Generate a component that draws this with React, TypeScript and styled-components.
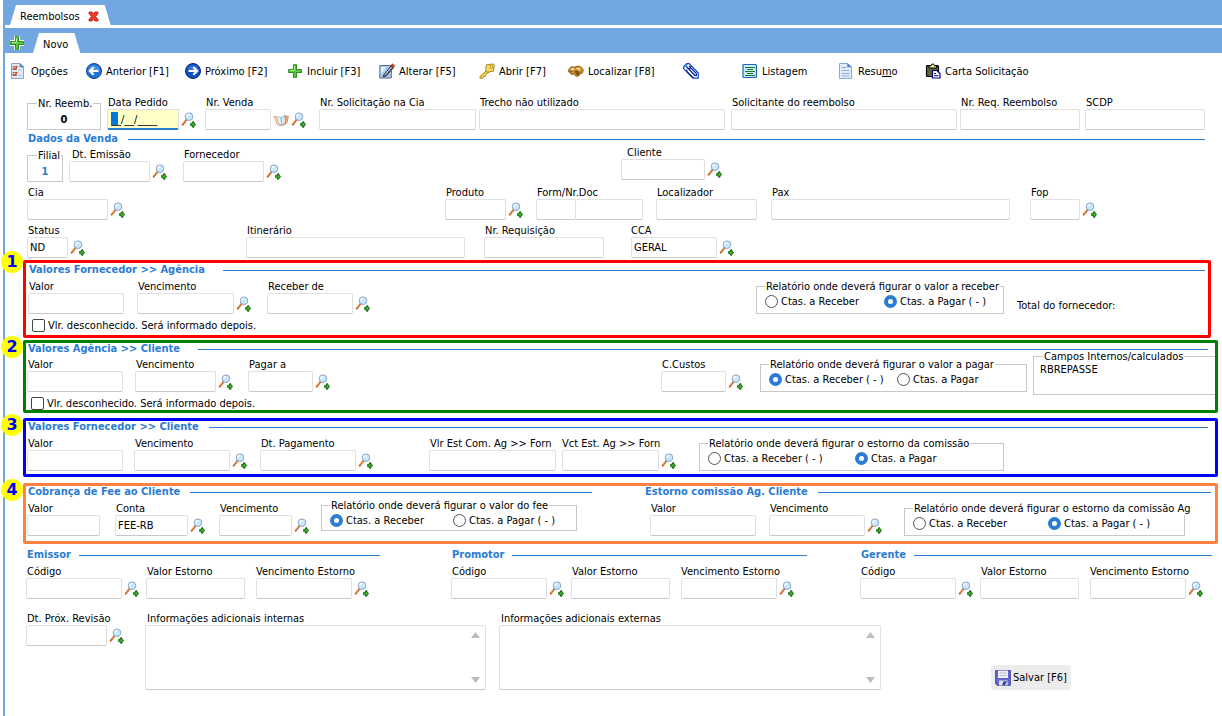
import React, { useId } from "react";
import styled, { createGlobalStyle, css } from "styled-components";

const BLUE = "#72a6e0";
const ACCENT = "#2b7cd3";
const LINE = "#c8c8c8";

const GlobalStyle = createGlobalStyle`
  *, *::before, *::after { box-sizing: border-box; }
  html, body, #root { height: 100%; }
  body { margin: 0; background: #fff; }
  body, input, button, textarea {
    font-family: "DejaVu Sans Condensed", "DejaVu Sans", sans-serif;
    font-size: 11px;
    line-height: 13px;
    color: #000;
  }
`;

/* ---------- shell ---------- */

const Shell = styled.div`
  min-height: 100%;
  margin-left: 3px;
  border-left: 2px solid ${BLUE};
`;

const OuterTabs = styled.nav`
  display: flex;
  align-items: flex-end;
  height: 25px;
  padding-left: 5px;
  background: ${BLUE};
`;

const InnerTabs = styled.nav`
  display: flex;
  align-items: flex-end;
  height: 25px;
  margin-top: 3px;
  padding-left: 4px;
  background: ${BLUE};
`;

const Tab = styled.div`
  display: flex;
  align-items: center;
  gap: 8px;
  height: 20px;
  padding: 2px 12px 0 10px;
  background: #fff;
  clip-path: polygon(6px 0, calc(100% - 6px) 0, 100% 100%, 0 100%);
`;

const PlainButton = styled.button`
  display: flex;
  align-items: center;
  gap: 4px;
  padding: 0;
  border: 0;
  background: none;
  white-space: nowrap;
  cursor: pointer;
`;

const AddTab = styled(PlainButton)`
  height: 20px;
  margin-right: 8px;
`;

const Toolbar = styled.div`
  display: grid;
  grid-template-columns: 75px 99px 102px 92px 100px 89px 115px 59px 96px 87px 1fr;
  align-items: center;
  height: 36px;
  padding-left: 6px;
`;

/* ---------- form parts ---------- */

const Form = styled.form`
  padding-top: 5px;
`;

const Row = styled.div<{ $cols: string; $h?: number; $gap?: number }>`
  display: grid;
  grid-template-columns: ${(p) => p.$cols};
  align-items: end;
  min-height: ${(p) => p.$h ?? 34}px;
  margin-top: ${(p) => p.$gap ?? 4}px;
`;

const Block = styled.section`
  padding: 0 17px 0 22px;
`;

const Panel = styled.section<{ $color: string; $gap: number; $end: number; $pad: string }>`
  position: relative;
  margin: ${(p) => p.$gap}px ${(p) => p.$end}px 0 18px;
  padding: ${(p) => p.$pad};
  border: 3px solid ${(p) => p.$color};
  border-radius: 2px;
`;

const Badge = styled.span<{ $raised?: boolean }>`
  position: absolute;
  top: ${(p) => (p.$raised ? -12 : -7)}px;
  left: -25px;
  display: grid;
  place-items: center;
  width: 22px;
  height: 22px;
  border-radius: 50%;
  background: #ffff00;
  color: #0000ff;
  font: bold 16px/20px "DejaVu Sans", sans-serif;
`;

const Title = styled.h2<{ $gap?: number; $end?: number }>`
  display: flex;
  align-items: center;
  gap: ${(p) => p.$gap ?? 10}px;
  margin: 0 ${(p) => p.$end ?? 0}px 0 1px;
  color: ${ACCENT};
  font-size: 11px;
  line-height: 12px;
  white-space: nowrap;
  &::after {
    content: "";
    flex: 1;
    height: 1px;
    background: ${ACCENT};
  }
`;

const FieldBox = styled.div<{ $top?: boolean }>`
  display: flex;
  flex-direction: column;
  min-width: 0;
  align-self: ${(p) => (p.$top ? "start" : "end")};
`;

const Label = styled.label<{ $indent: number }>`
  padding-left: ${(p) => p.$indent}px;
  line-height: 13px;
  white-space: nowrap;
`;

const Controls = styled.div<{ $end: number }>`
  display: flex;
  align-items: center;
  gap: 2px;
  padding-right: ${(p) => p.$end}px;
`;

const boxLook = css`
  border: 1px solid #e0e0e0;
  border-bottom-color: ${LINE};
  border-radius: 2px;
  background: #fff;
  outline: none;
`;

const TextInput = styled.input<{ $w?: number; $active?: boolean }>`
  ${boxLook}
  ${(p) => (p.$w ? `flex: none; width: ${p.$w}px;` : "flex: 1; width: 0; min-width: 0;")}
  height: 21px;
  padding: 0 2px;
  ${(p) =>
    p.$active &&
    css`
      padding-left: 3px;
      border-bottom: 2px solid ${ACCENT};
      background: linear-gradient(#0078d7, #0078d7) 3px 2px / 7px 13px no-repeat #ffffc8;
    `}
`;

const SplitInputs = styled.div`
  display: flex;
  input + input { margin-left: -1px; }
`;

const Memo = styled.div<{ $end?: number }>`
  position: relative;
  padding-right: ${(p) => p.$end ?? 0}px;
  line-height: 0;
`;

const MemoText = styled.textarea`
  ${boxLook}
  width: 100%;
  height: 65px;
  resize: none;
`;

const MemoArrows = styled.svg<{ $right: number }>`
  position: absolute;
  top: 6px;
  right: ${(p) => p.$right}px;
`;

const Group = styled.fieldset<{ $w?: number; $h?: number; $top?: boolean }>`
  width: ${(p) => (p.$w ? `${p.$w}px` : "auto")};
  height: ${(p) => p.$h ?? 34}px;
  min-width: 0;
  margin: 0;
  padding: 0 0 0 8px;
  align-self: ${(p) => (p.$top ? "start" : "end")};
  border: 1px solid ${LINE};
  legend {
    padding: 0 1px;
    line-height: 13px;
    white-space: nowrap;
  }
`;

const NumberGroup = styled(Group)<{ $blue?: boolean }>`
  padding-left: 9px;
  output {
    display: block;
    padding: 3px 9px 0 0;
    color: ${(p) => (p.$blue ? ACCENT : "#000")};
    font-weight: bold;
    text-align: center;
  }
`;

const CalculatedGroup = styled(Group)`
  height: 45px;
  margin: -8px 0 -3px;
  padding-left: 6px;
  border-right: 0;
  legend { margin-left: 3px; }
`;

const Options = styled.div<{ $first: number }>`
  display: grid;
  grid-template-columns: ${(p) => p.$first}px 1fr;
  height: 17px;
  align-items: center;
`;

const Choice = styled.label`
  display: flex;
  align-items: center;
  gap: 3px;
  white-space: nowrap;
`;

const CheckLine = styled(Choice)`
  height: 14px;
  margin: 4px 0 0 4px;
`;

const Radio = styled.input.attrs({ type: "radio" })`
  appearance: none;
  width: 13px;
  height: 13px;
  margin: 0;
  border: 1px solid #555;
  border-radius: 50%;
  background: #fff;
  &:checked { border: 4px solid ${ACCENT}; }
`;

const Check = styled.input.attrs({ type: "checkbox" })`
  appearance: none;
  width: 13px;
  height: 13px;
  margin: 0;
  border: 1px solid #444;
  border-radius: 2px;
  background: #fff;
`;

const TotalText = styled.span`
  align-self: center;
  padding-top: 16px;
`;

const Columns = styled.div<{ $cols: string; $gap?: number }>`
  display: grid;
  grid-template-columns: ${(p) => p.$cols};
  margin-top: ${(p) => p.$gap ?? 0}px;
`;

const SubColumn = styled.div`
  min-width: 0;
`;

const Indented = styled.div`
  padding-left: 6px;
`;

const People = styled.section`
  padding: 0 10px 0 21px;
`;

const SaveButton = styled(PlainButton)`
  gap: 2px;
  justify-self: start;
  height: 25px;
  padding: 0 4px;
  border-radius: 4px;
  background: #ececec;
`;

/* ---------- icons ---------- */

const Svg = ({ children, size = 16 }: { children: React.ReactNode; size?: number }) => (
  <svg width={size} height={size} viewBox="0 0 16 16" aria-hidden="true">
    {children}
  </svg>
);

const LookupIcon = () => (
  <Svg>
    <path d="M5.400 7.800 1.700 12.600" stroke="#c8692a" strokeWidth="2" strokeLinecap="round" />
    <path d="M4.800 7.800 1.500 12" stroke="#f0a860" strokeWidth="0.800" />
    <circle cx="8" cy="4.700" r="3.800" fill="#c9e8fb" stroke="#8aa4c8" strokeWidth="1" />
    <path d="M5.800 4.500a2.400 2.400 0 0 1 2.400-2.200" stroke="#fff" strokeWidth="1.200" fill="none" />
    <path d="M11.500 9.800h1.500v1.500l1.800 1.200-1.800 1.200v1.500h-1.500v-1.500H9.700v-2.400h1.800z" fill="#3fb52a" stroke="#14610f" strokeWidth="0.900" strokeLinejoin="round" />
  </Svg>
);

const PlusIcon = ({ outline = false }: { outline?: boolean }) => (
  <Svg>
    {outline && (
      <path d="M6 2h4v4h4v4h-4v4H6v-4H2V6h4z" fill="#fff" stroke="#fff" strokeWidth="2" strokeLinejoin="round" />
    )}
    <path d="M6.500 1.700h3v4.800h4.800v3H9.500v4.800h-3V9.500H1.700v-3h4.800z" fill="#5cc83c" stroke="#2a8a1c" strokeWidth="1.100" strokeLinejoin="round" />
    <path d="M7.400 3v4.400H3" stroke="#b5f09c" fill="none" />
  </Svg>
);

const CloseIcon = () => (
  <svg width="11" height="11" viewBox="0 0 11 11" aria-hidden="true">
    <path d="M1 1h3l1.500 2L7 1h3v1.500L7.600 5.500 10 8.500V10H7L5.500 8 4 10H1V8.500L3.400 5.500 1 2.500z" fill="#f0392b" stroke="#b01810" strokeWidth="0.800" />
  </svg>
);

const OptionsIcon = () => (
  <Svg>
    <path d="M.500.500h8.500l3.500 3.500v11.500H.500z" fill="#dfeafa" stroke="#8aa2cc" />
    <path d="M9 .500V4h3.500z" fill="#5f8bd0" stroke="#6b8ac0" />
    <path d="M2 3.500h3.500v3H2zM2 9.500h3.500v3H2z" fill="#fff" stroke="#8a5a52" strokeWidth="0.800" />
    <path d="m2.500 5 1.200 1.200L6.400 2.800M2.500 11l1.200 1.200 2.700-3.400" fill="none" stroke="#d84020" strokeWidth="1.200" />
    <path d="M7.500 7h3M7.500 12.500h3" stroke="#9ab4dc" />
  </Svg>
);

const ArrowIcon = ({ right = false }: { right?: boolean }) => (
  <Svg>
    <circle cx="8" cy="8" r="7.500" fill={right ? "#0a4fc4" : "#1f74d8"} stroke={right ? "#06267c" : "#0c3f92"} />
    <path d="M2.500 6.500a5.800 5.800 0 0 1 11 0 12 12 0 0 1-11 0z" fill="#fff" opacity="0.220" />
    <path d={right ? "M3.500 8h8.500M8.300 4.200 12.200 8l-3.900 3.800" : "M12.500 8H4M7.700 4.200 3.800 8l3.900 3.800"} stroke="#fff" strokeWidth="2.200" fill="none" />
  </Svg>
);

const EditIcon = () => (
  <Svg>
    <path d="M.800 2.500h11.500v12.500H.800z" fill="#a9cdf2" stroke="#5b6b86" />
    <path d="M2 4h5L2 11z" fill="#e6f2ff" />
    <path d="M5 11.500 12 2.800l2.500 2L7.300 13l-3.300 1z" fill="#5d6672" stroke="#2c333e" strokeWidth="0.800" />
    <path d="M6 11.500 12.500 4" stroke="#d5dbe2" />
    <path d="m11.800 2.700 1.600-1.900 2.300 2-1.500 1.900z" fill="#e03a1c" stroke="#8e1d0c" strokeWidth="0.600" />
  </Svg>
);

const KeyIcon = () => (
  <Svg>
    <path d="m8 7.200-7 6.300v1.700h2.700l.8-1.700h1.700l.6-1.900L10.200 9z" fill="#f3cf45" stroke="#a67c14" strokeWidth="0.900" />
    <path d="M7.300 1.700 14.500 1l.8 1.200-.9 6-6.300 1-1.400-2z" fill="#f8dc62" stroke="#a67c14" strokeWidth="0.900" strokeLinejoin="round" />
    <path d="M10.800 2.800h2.600v2.600h-1.800z" fill="#fff" stroke="#a67c14" strokeWidth="0.800" />
  </Svg>
);

const BinocularsIcon = () => (
  <Svg>
    <path d="M.700 6.500 3 3.800l4 .3 2-1 3.500.4 2.800 3.300-.7 3-2.500 1.100-1.300 2-3 .400-1.600-2.200-2.800.400L.700 9z" fill="#c98a2b" stroke="#7e4f10" strokeWidth="0.800" />
    <path d="M2 6.500 4 4.900l3 .5-2 2.300zM8 5l3.500-.5 1.500 2-3 1z" fill="#f6d78c" />
    <path d="M7 8.500 9.500 8l2 2.500-2 1.500zM1.500 8l3 .5" stroke="#5b3609" fill="#8a5714" strokeWidth="0.700" />
  </Svg>
);

const ClipIcon = () => (
  <Svg>
    <g fill="none" strokeWidth="1.200" strokeLinejoin="round">
      <path d="M.700 3.700 3.700.700h2.500l9 9.300v5.200H10L.700 5.900z" stroke="#0b3fd0" />
      <path d="m3.300 3.500 8.700 9h1.400v-1.900L6 3M10.300 15 3.800 8.300V6.500M8.500 3.200 6 5.500" stroke="#0822a0" />
      <path d="m1.500 4 3-2.700" stroke="#1e8af0" />
    </g>
  </Svg>
);

const ListIcon = () => (
  <Svg>
    <rect x="1" y="1.500" width="13.500" height="13" rx="1" fill="#cfeafc" stroke="#1c66b8" strokeWidth="1.200" />
    <path d="M3 4.500h10M5 6.500h6M3 8.500h10M5 10.500h6M3 12.500h10" stroke="#157a2c" />
  </Svg>
);

const PageIcon = () => (
  <Svg>
    <path d="M1.500.500h8l4 3.500v11.500h-12z" fill="#e4effc" stroke="#86a9da" />
    <path d="M9.500.500V4h4z" fill="#4e86cf" stroke="#5c88c4" strokeWidth="0.600" />
    <path d="M3.500 4.500h5M3.500 7.500h8M3.500 10.500h8M3.500 13h8" stroke="#8dabd6" />
  </Svg>
);

const PasteIcon = () => (
  <Svg>
    <rect x="1.500" y="2.500" width="12" height="11" rx="1" fill="#62623a" stroke="#000" strokeWidth="1.200" />
    <path d="M4 5V2.800h2L7 1h1.500l1 1.800h2V5z" fill="#f2ee9a" stroke="#000" />
    <path d="M7.500 7.500h4.500l3 3v4.500H7.500z" fill="#fff" stroke="#000080" strokeWidth="1.200" />
    <path d="M9 10.500h2M9 12.700h4.500" stroke="#000080" />
  </Svg>
);

const MapIcon = () => (
  <Svg>
    <path d="m.800 4 3.500 8.500 3.500 1.500L7.500 7z" fill="#fde0c4" stroke="#e9a06c" strokeWidth="0.900" />
    <path d="M3.500 4.300 8 5.800l.8 7.700-3-1.500z" fill="#eef6fc" stroke="#8fb4d4" strokeWidth="0.800" />
    <path d="M8 5.800 12 3.300l.8 7.400-4 2.800z" fill="#dcebf7" stroke="#7ea8cc" strokeWidth="0.800" />
    <path d="m12.300 3.800 3 .700-1.300 6-3.500 2.800 2-2.500z" fill="#fbb27c" stroke="#dd7a3c" strokeWidth="0.900" />
  </Svg>
);

const DiskIcon = () => (
  <Svg>
    <path d="M.600.600h14.800v14.800H2.200L.600 13.800z" fill="#6468c8" stroke="#4a4ea8" />
    <path d="M3 .600h10v7.400H3z" fill="#eef0f6" />
    <path d="M4.500 3h7M4.500 5.500h7" stroke="#b9bfd0" />
    <path d="M4 10.500h8.500v5H4z" fill="#dfe2f0" />
    <path d="M8.500 11.200H12L10 15.500H7z" fill="#3e429c" />
  </Svg>
);

/* ---------- composed controls ---------- */

type FieldProps = {
  label: string;
  w?: number;
  end?: number;
  indent?: number;
  value?: string;
  lookup?: boolean;
  map?: boolean;
  active?: boolean;
  top?: boolean;
};

const Field = ({ label, w, end = 0, indent = 1, value, lookup, map, active, top }: FieldProps) => {
  const id = useId();
  return (
    <FieldBox $top={top}>
      <Label htmlFor={id} $indent={indent}>{label}</Label>
      <Controls $end={end}>
        <TextInput id={id} type="text" $w={w} $active={active} defaultValue={value} />
        {map && (
          <PlainButton type="button" aria-label={`Mapa ${label}`}><MapIcon /></PlainButton>
        )}
        {lookup && (
          <PlainButton type="button" aria-label={`Pesquisar ${label}`}><LookupIcon /></PlainButton>
        )}
      </Controls>
    </FieldBox>
  );
};

type RadioGroupProps = {
  legend: string;
  options: [string, string];
  selected: number;
  first: number;
  w: number;
  h?: number;
  top?: boolean;
};

const RadioGroup = ({ legend, options, selected, first, w, h, top }: RadioGroupProps) => {
  const name = useId();
  return (
    <Group $w={w} $h={h} $top={top}>
      <legend>{legend}</legend>
      <Options $first={first}>
        {options.map((text, i) => (
          <Choice key={text}>
            <Radio name={name} defaultChecked={i === selected} />
            {text}
          </Choice>
        ))}
      </Options>
    </Group>
  );
};

const MemoField = ({ label, end = 0 }: { label: string; end?: number }) => {
  const id = useId();
  return (
    <FieldBox $top>
      <Label htmlFor={id} $indent={2}>{label}</Label>
      <Memo $end={end}>
        <MemoText id={id} />
        <MemoArrows $right={end + 6} width="9" height="53" viewBox="0 0 9 53" aria-hidden="true">
          <path d="M0 7 4.500 1 9 7zM0 46l4.500 6L9 46z" fill="#bdbdbd" />
        </MemoArrows>
      </Memo>
    </FieldBox>
  );
};

const Person = ({ title, end }: { title: string; end: number }) => (
  <SubColumn>
    <Title $gap={8} $end={end}>{title}</Title>
    <Row $cols="120px 110px 1fr">
      <Field label="Código" w={96} lookup />
      <Field label="Valor Estorno" w={99} />
      <Field label="Vencimento Estorno" w={96} lookup indent={0} />
    </Row>
  </SubColumn>
);

const tools: [React.ReactNode, React.ReactNode][] = [
  [<OptionsIcon />, "Opções"],
  [<ArrowIcon />, "Anterior [F1]"],
  [<ArrowIcon right />, "Próximo [F2]"],
  [<PlusIcon />, "Incluir [F3]"],
  [<EditIcon />, "Alterar [F5]"],
  [<KeyIcon />, "Abrir [F7]"],
  [<BinocularsIcon />, "Localizar [F8]"],
  [<ClipIcon />, ""],
  [<ListIcon />, "Listagem"],
  [<PageIcon />, <span>Resu<u>m</u>o</span>],
  [<PasteIcon />, "Carta Solicitação"],
];

export default function App() {
  return (
    <>
      <GlobalStyle />
      <Shell>
        <OuterTabs>
          <Tab>
            Reembolsos
            <PlainButton type="button" aria-label="Fechar"><CloseIcon /></PlainButton>
          </Tab>
        </OuterTabs>
        <InnerTabs>
          <AddTab type="button" aria-label="Adicionar"><PlusIcon outline /></AddTab>
          <Tab>Novo</Tab>
        </InnerTabs>
        <Toolbar>
          {tools.map(([icon, text], i) => (
            <PlainButton key={i} type="button" aria-label={text ? undefined : "Anexos"}>
              {icon}
              {text}
            </PlainButton>
          ))}
        </Toolbar>

        <Form>
          <Block>
            <Row $cols="80px 98px 114px 160px 252fr 229fr 125fr 120fr" $gap={2}>
              <NumberGroup $w={74} $h={33}>
                <legend>Nr. Reemb.</legend>
                <output>0</output>
              </NumberGroup>
              <Field label="Data Pedido" w={72} value="__/__/____" active lookup />
              <Field label="Nr. Venda" w={66} map lookup />
              <Field label="Nr. Solicitação na Cia" w={157} />
              <Field label="Trecho não utilizado" end={6} />
              <Field label="Solicitante do reembolso" end={3} />
              <Field label="Nr. Req. Reembolso" end={5} />
              <Field label="SCDP" />
            </Row>
          </Block>

          <Block>
            <Row $cols="1fr" $h={12} $gap={3}>
              <Title>Dados da Venda</Title>
            </Row>
            <Row $cols="42px 114px 438fr 584fr" $h={36} $gap={1}>
              <NumberGroup $w={36} $h={33} $blue>
                <legend>Filial</legend>
                <output>1</output>
              </NumberGroup>
              <Field label="Dt. Emissão" w={81} indent={3} lookup />
              <Field label="Fornecedor" w={81} lookup />
              <Field label="Cliente" w={84} indent={6} lookup top />
            </Row>
            <Row $cols="418fr 91px 120px 115px 259fr 175px">
              <Field label="Cia" w={81} lookup />
              <Field label="Produto" w={61} lookup />
              <FieldBox>
                <Label htmlFor="form-doc" $indent={1}>Form/Nr.Doc</Label>
                <SplitInputs>
                  <TextInput id="form-doc" $w={40} />
                  <TextInput aria-label="Nr. Doc" $w={68} />
                </SplitInputs>
              </FieldBox>
              <Field label="Localizador" w={101} />
              <Field label="Pax" end={20} />
              <Field label="Fop" w={50} lookup />
            </Row>
            <Row $cols="219px 238fr 147px 574fr">
              <Field label="Status" w={41} value="ND" lookup />
              <Field label="Itinerário" end={19} />
              <Field label="Nr. Requisição" w={120} />
              <Field label="CCA" w={86} value="GERAL" indent={0} lookup />
            </Row>
          </Block>

          <Panel $color="#ff0000" $gap={2} $end={11} $pad="1px 3px 3px 2px">
            <Badge $raised>1</Badge>
            <Title $gap={18}>Valores Fornecedor &gt;&gt; Agência</Title>
            <Row $cols="109px 130px 489fr 261px 188px">
              <Field label="Valor" w={96} />
              <Field label="Vencimento" w={97} lookup />
              <Field label="Receber de" w={86} lookup />
              <RadioGroup legend="Relatório onde deverá figurar o valor a receber" options={["Ctas. a Receber", "Ctas. a Pagar ( - )"]} selected={1} first={119} w={248} />
              <TotalText>Total do fornecedor:</TotalText>
            </Row>
            <CheckLine><Check />Vlr. desconhecido. Será informado depois.</CheckLine>
          </Panel>

          <Panel $color="#008000" $gap={2} $end={4} $pad="0 0 0 1px">
            <Badge>2</Badge>
            <Title $gap={18} $end={7}>Valores Agência &gt;&gt; Cliente</Title>
            <Row $cols="108px 113px 413fr 99px 273px 182px" $gap={3}>
              <Field label="Valor" w={96} />
              <Field label="Vencimento" w={81} lookup />
              <Field label="Pagar a" w={65} lookup />
              <Field label="C.Custos" w={65} lookup />
              <RadioGroup legend="Relatório onde deverá figurar o valor a pagar" options={["Ctas. a Receber ( - )", "Ctas. a Pagar"]} selected={0} first={128} w={267} />
              <CalculatedGroup>
                <legend>Campos Internos/calculados</legend>
                RBREPASSE
              </CalculatedGroup>
            </Row>
            <CheckLine><Check />Vlr. desconhecido. Será informado depois.</CheckLine>
          </Panel>

          <Panel $color="#0000ff" $gap={5} $end={4} $pad="0 7px 3px 1px">
            <Badge>3</Badge>
            <Title>Valores Fornecedor &gt;&gt; Cliente</Title>
            <Row $cols="107px 126px 169fr 133px 137px 509fr">
              <Field label="Valor" w={96} />
              <Field label="Vencimento" w={96} lookup />
              <Field label="Dt. Pagamento" w={96} lookup />
              <Field label="Vlr Est Com. Ag >> Forn" w={127} />
              <Field label="Vct Est. Ag >> Forn" w={97} indent={0} lookup />
              <RadioGroup legend="Relatório onde deverá figurar o estorno da comissão" options={["Ctas. a Receber ( - )", "Ctas. a Pagar"]} selected={1} first={147} w={305} />
            </Row>
          </Panel>

          <Panel $color="#ff8040" $gap={6} $end={4} $pad="0 4px 5px 1px">
            <Badge>4</Badge>
            <Columns $cols="617fr 567fr">
              <SubColumn>
                <Title $end={52}>Cobrança de Fee ao Cliente</Title>
                <Row $cols="88px 104px 102px 1fr" $h={37} $gap={1}>
                  <Field label="Valor" w={73} />
                  <Field label="Conta" w={73} value="FEE-RB" lookup />
                  <Field label="Vencimento" w={73} lookup />
                  <RadioGroup legend="Relatório onde deverá figurar o valor do fee" options={["Ctas. a Receber", "Ctas. a Pagar ( - )"]} selected={0} first={123} w={256} h={32} top />
                </Row>
              </SubColumn>
              <SubColumn>
                <Title>Estorno comissão Ag. Cliente</Title>
                <Indented>
                  <Row $cols="119px 135px 1fr" $h={37} $gap={1}>
                    <Field label="Valor" w={106} />
                    <Field label="Vencimento" w={96} lookup />
                    <RadioGroup legend="Relatório onde deverá figurar o estorno da comissão Ag" options={["Ctas. a Receber", "Ctas. a Pagar ( - )"]} selected={1} first={135} w={281} />
                  </Row>
                </Indented>
              </SubColumn>
            </Columns>
          </Panel>

          <People>
            <Columns $cols="425fr 409fr 352fr" $gap={5}>
              <Person title="Emissor" end={71} />
              <Person title="Promotor" end={53} />
              <Person title="Gerente" end={0} />
            </Columns>
            <Row $cols="119px 354fr 382fr 110px 221px" $gap={13}>
              <Field label="Dt. Próx. Revisão" w={81} lookup top />
              <MemoField label="Informações adicionais internas" end={13} />
              <MemoField label="Informações adicionais externas" />
              <span />
              <SaveButton type="button"><DiskIcon />Salvar [F6]</SaveButton>
            </Row>
          </People>
        </Form>
      </Shell>
    </>
  );
}
